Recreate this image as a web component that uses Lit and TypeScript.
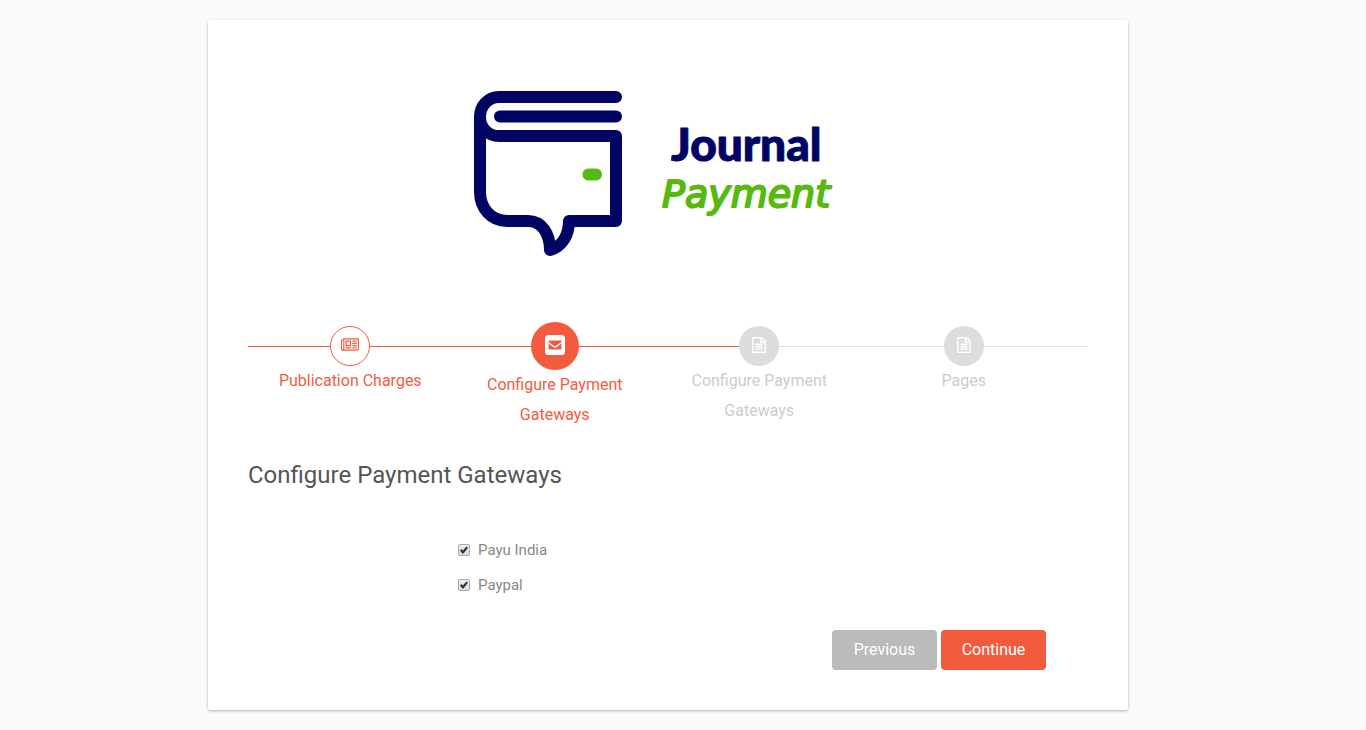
import { LitElement, html, svg, css } from "lit";
import { customElement, property, state } from "lit/decorators.js";
import { classMap } from "lit/directives/class-map.js";

type StepState = "done" | "active" | "pending";

const icons = {
  newspaper: svg`<svg width="18" height="16" viewBox="0 0 2048 1792" fill="currentColor" aria-hidden="true">
    <path d="M1024 512h-384v384h384v-384zm128 640v128h-640v-128h640zm0-768v640h-640v-640h640zm640 768v128h-512v-128h512zm0-256v128h-512v-128h512zm0-256v128h-512v-128h512zm0-256v128h-512v-128h512zm-1536 960v-960h-128v960q0 26 19 45t45 19 45-19 19-45zm1664 0v-1088h-1536v1088q0 33-11 64h1483q26 0 45-19t19-45zm128-1216v1216q0 80-56 136t-136 56h-1664q-80 0-136-56t-56-136v-1088h256v-128h1792z"/>
  </svg>`,
  envelope: svg`<svg width="20" height="20" viewBox="0 0 20 20" aria-hidden="true">
    <rect width="20" height="20" rx="3.600" fill="currentColor"/>
    <path d="M3.500 6.900V6.300q0-.8.8-.8h11.400q.8 0 .8.8v.6l-5.100 3.700q-1.400 1-2.800 0zM3.500 8.600l4.700 3.300q1.800 1.200 3.600 0l4.700-3.300v5.200q0 .8-.8.8H4.300q-.8 0-.8-.8z" fill="#f35b3f"/>
  </svg>`,
  file: svg`<svg width="14" height="16" viewBox="0 0 1536 1792" fill="currentColor" stroke="currentColor" stroke-width="50" aria-hidden="true">
    <path d="M1468 380q28 28 48 76t20 88v1152q0 40-28 68t-68 28h-1344q-40 0-68-28t-28-68v-1600q0-40 28-68t68-28h896q40 0 88 20t76 48zm-444-244v376h376q-10-29-22-41l-313-313q-12-12-41-22zm384 1528v-1024h-416q-40 0-68-28t-28-68v-416h-768v1536h1280zm-1024-864q0-14 9-23t23-9h704q14 0 23 9t9 23v64q0 14-9 23t-23 9h-704q-14 0-23-9t-9-23v-64zm736 224q14 0 23 9t9 23v64q0 14-9 23t-23 9h-704q-14 0-23-9t-9-23v-64q0-14 9-23t23-9h704zm0 256q14 0 23 9t9 23v64q0 14-9 23t-23 9h-704q-14 0-23-9t-9-23v-64q0-14 9-23t23-9h704z"/>
  </svg>`,
};

@customElement("brand-logo")
class BrandLogo extends LitElement {
  static styles = css`
    :host { display: block; text-align: center; }
    .logo { display: inline-block; vertical-align: top; max-width: 100%; }
    .outline { fill: none; stroke: #000564; stroke-width: 12; stroke-linecap: round; stroke-linejoin: round; }
    .clasp { stroke: #56b90f; stroke-width: 12; stroke-linecap: round; }
    .name { font: 900 46px Lato, sans-serif; fill: #000564; stroke: #000564; stroke-width: 1; stroke-linejoin: round; }
    .script { font: italic 400 38px "DejaVu Sans", sans-serif; fill: #56b90f; stroke: #56b90f; stroke-width: 2; stroke-linejoin: round; }
  `;
  render() {
    return html`<svg class="logo" width="392" height="180" viewBox="472 80 392 180">
      <path class="outline" d="M616 97H499C488 97 480 106 480 117V192C480 208 491 221 507 221H528C542 221 550 234 550 250C562 247 569 235 569 221H616V136H499C488 136 480 128 480 117"/>
      <path class="outline" d="M500 116.500H616"/>
      <path class="clasp" d="M588.500 174.500H596"/>
      <text class="name" x="671" y="161">Journal</text>
      <text class="script" x="662" y="207">Payment</text>
    </svg>`;
  }
}

@customElement("wizard-step")
class WizardStep extends LitElement {
  @property() label = "";
  @property() icon: keyof typeof icons = "file";
  @property() status: StepState = "pending";
  static styles = css`
    :host { display: block; }
    .step { display: flex; flex-direction: column; align-items: center; padding: 4px 12px 0; color: #ccc; }
    .dot { box-sizing: border-box; display: grid; place-items: center; width: 40px; height: 40px; border-radius: 50%; background: #ddd; color: #fff; }
    .dot svg { display: block; margin-bottom: 2px; }
    .label { margin: 0; font-size: 16px; line-height: 30px; text-align: center; }
    .done { color: #f35b3f; }
    .done .dot { background: #fff; border: 1px solid #f35b3f; color: #f35b3f; }
    .active { padding-top: 0; color: #f35b3f; }
    .active .dot { width: 48px; height: 48px; background: #f35b3f; color: #fff; }
  `;
  render() {
    return html`<div class=${classMap({ step: true, [this.status]: true })}>
      <span class="dot">${icons[this.icon]}</span>
      <p class="label">${this.label}</p>
    </div>`;
  }
}

@customElement("app-root")
class AppRoot extends LitElement {
  @state() private gateways = [
    { id: "payu", name: "Payu India", enabled: true },
    { id: "paypal", name: "Paypal", enabled: true },
  ];
  private steps = [
    { label: "Publication Charges", icon: "newspaper", status: "done" },
    { label: "Configure Payment Gateways", icon: "envelope", status: "active" },
    { label: "Configure Payment Gateways", icon: "file", status: "pending" },
    { label: "Pages", icon: "file", status: "pending" },
  ];
  static styles = css`
    :host { display: block; box-sizing: border-box; min-height: 100vh; padding: 20px 30px 20px 0; background: #fbf9fa; font-family: Roboto, sans-serif; color: #888; }
    .card { box-sizing: border-box; max-width: 920px; margin: 0 auto; padding: 60px 40px 40px; background: #fff; border-radius: 2px; box-shadow: 0 1px 3px rgba(0, 0, 0, 0.3); }
    .wizard { display: grid; margin-top: 62px; }
    .track { grid-area: 1 / 1; align-self: start; height: 1px; margin-top: 24px; background: #ddd; }
    .progress { width: 60%; height: 1px; background: #f35b3f; }
    .steps { grid-area: 1 / 1; display: grid; grid-template-columns: repeat(4, 1fr); margin: 0; padding: 0 22px 0 0; list-style: none; }
    .title { margin: 30px 0 0; font-size: 24px; font-weight: 400; line-height: 30px; color: #555; }
    .options { display: grid; gap: 15px; width: 50%; margin: 50px 0 0 25%; padding: 0; border: 0; }
    .option { display: flex; align-items: center; gap: 8px; font-size: 15px; line-height: 20px; }
    .box { appearance: none; box-sizing: border-box; display: grid; width: 12px; height: 12px; margin: 0; border: 1px solid #aaa; border-radius: 2px; background: linear-gradient(#eee, #ddd); }
    .box:checked::after { content: ""; margin: 1px; background: #333; clip-path: polygon(0 56%, 18% 38%, 36% 56%, 80% 6%, 100% 22%, 44% 94%, 28% 94%); }
    .actions { display: flex; justify-content: flex-end; gap: 4px; margin: 35px 42px 0 0; }
    .button { min-width: 105px; height: 40px; padding: 0 20px; border: 0; border-radius: 4px; font: 400 16px/40px Roboto, sans-serif; color: #fff; background: #f35b3f; cursor: pointer; }
    .previous { background: #bbb; }
  `;
  private toggle(id: string) {
    this.gateways = this.gateways.map((g) => (g.id === id ? { ...g, enabled: !g.enabled } : g));
  }
  render() {
    return html`<main class="card">
      <brand-logo></brand-logo>
      <div class="wizard">
        <div class="track"><div class="progress"></div></div>
        <ol class="steps">
          ${this.steps.map((s) => html`<li><wizard-step .label=${s.label} .icon=${s.icon as keyof typeof icons} .status=${s.status as StepState}></wizard-step></li>`)}
        </ol>
      </div>
      <form>
        <h1 class="title">Configure Payment Gateways</h1>
        <div class="options">
          ${this.gateways.map((g) => html`<label class="option" for=${g.id}>
            <input class="box" type="checkbox" id=${g.id} .checked=${g.enabled} @change=${() => this.toggle(g.id)} />${g.name}</label>`)}
        </div>
        <div class="actions">
          <button class="button previous" type="button">Previous</button>
          <button class="button" type="button">Continue</button>
        </div>
      </form>
    </main>`;
  }
}
